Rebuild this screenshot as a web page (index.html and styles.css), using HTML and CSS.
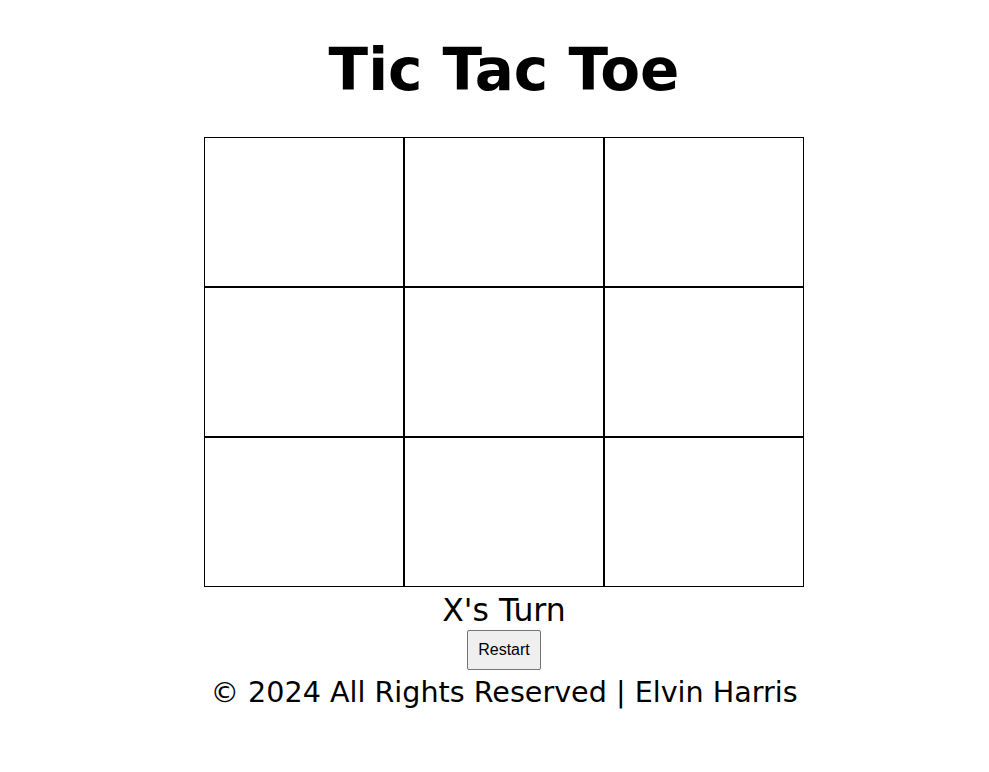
FILE: index.html
```html
<!DOCTYPE html>
<html>
  <head>
    <title>Tic Tac Toe</title>
    <link rel="stylesheet" href="styles.css">
  </head>
  <body>
    <h1 class="title">Tic Tac Toe</h1>
    <div class="board" id="board">
      <div class="cell" data-index="0"></div>
      <div class="cell" data-index="1"></div>
      <div class="cell" data-index="2"></div>
      <div class="cell" data-index="3"></div>
      <div class="cell" data-index="4"></div>
      <div class="cell" data-index="5"></div>
      <div class="cell" data-index="6"></div>
      <div class="cell" data-index="7"></div>
      <div class="cell" data-index="8"></div>
    </div>
    <h2 class="status" id="status">X's Turn</h2>
    <button class="restart" id="restart">Restart</button>
    <p class="footer">&copy; 2024 All Rights Reserved | Elvin Harris</p>
  </body>
</html>
```

FILE: styles.css
```css
body {
    margin: 0;
    padding-left: 19px;
    font-family: "Comic Sans MS", "DejaVu Sans", sans-serif;
    color: #000;
    background: #fff;
    display: flex;
    flex-direction: column;
    align-items: center;
    text-align: center;
}
.title {
    font-size: 58px;
    font-weight: bold;
    margin: 36px 0 32.5px 0;
}
.board {
    display: grid;
    grid-template-columns: repeat(3, 200px);
    grid-template-rows: repeat(3, 150px);
}
.cell {
    box-sizing: border-box;
    border: 1px solid #000;
    cursor: pointer;
}
.status {
    font-size: 31.5px;
    font-weight: normal;
    margin: 5px 0 2.3px 0;
}
.restart {
    font-family: "Liberation Sans", Arial, sans-serif;
    font-size: 16px;
    padding: 10px;
    color: #000;
    background-color: #efefef;
    border: 1px solid #767676;
    border-radius: 2px;
    cursor: pointer;
}
.footer {
    font-size: 28.6px;
    margin: 5px 0 0 0;
}
```
